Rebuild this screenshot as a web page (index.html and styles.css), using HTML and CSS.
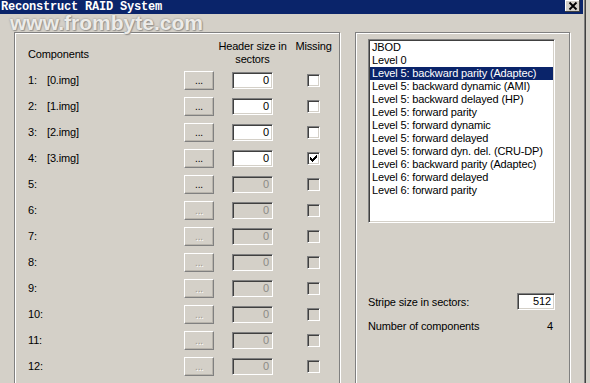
FILE: index.html
```html
<!DOCTYPE html>
<html lang="en">

<head>
     <meta charset="UTF-8">
     <meta name="viewport" content="width=device-width, initial-scale=1.0">
     <title>Reconstruct RAID System</title>
     <link rel="stylesheet" href="styles.css">
</head>

<body>
     <div class="window">
          <div class="titlebar">
               <span class="title">Reconstruct RAID System</span>
               <span class="close-btn">
                    <svg width="12" height="10" viewBox="0 0 12 10">
                         <path d="M2.5 1.5 L9.5 8.5 M9.5 1.5 L2.5 8.5" stroke="#000" stroke-width="1.8" />
                    </svg>
               </span>
          </div>
          <div class="watermark">www.frombyte.com</div>

          <div class="content">
               <!-- components -->
               <div class="group left-group">
                    <div class="comp-grid">
                         <div class="head-comp">Components</div>
                         <div class="head-size"><span>Header size in<br>sectors</span></div>
                         <div class="head-missing"><span>Missing</span></div>

                         <div class="num">1:</div><div class="name">[0.img]</div>
                         <div class="browse">...</div><div class="edit">0</div><div class="check"></div>

                         <div class="num">2:</div><div class="name">[1.img]</div>
                         <div class="browse">...</div><div class="edit">0</div><div class="check"></div>

                         <div class="num">3:</div><div class="name">[2.img]</div>
                         <div class="browse">...</div><div class="edit">0</div><div class="check"></div>

                         <div class="num">4:</div><div class="name">[3.img]</div>
                         <div class="browse">...</div><div class="edit">0</div>
                         <div class="check">
                              <svg width="7" height="7" viewBox="0 0 7 7">
                                   <path d="M0 2h1v1h1v1h1v-1h1v-1h1v-1h1v-1h1v3h-1v1h-1v1h-1v1h-1v1h-1v-1h-1v-1h-1z" fill="#000" />
                              </svg>
                         </div>

                         <div class="num">5:</div><div class="name"></div>
                         <div class="browse">...</div><div class="edit off">0</div><div class="check off"></div>

                         <div class="num">6:</div><div class="name"></div>
                         <div class="browse off">...</div><div class="edit off">0</div><div class="check off"></div>

                         <div class="num">7:</div><div class="name"></div>
                         <div class="browse off">...</div><div class="edit off">0</div><div class="check off"></div>

                         <div class="num">8:</div><div class="name"></div>
                         <div class="browse off">...</div><div class="edit off">0</div><div class="check off"></div>

                         <div class="num">9:</div><div class="name"></div>
                         <div class="browse off">...</div><div class="edit off">0</div><div class="check off"></div>

                         <div class="num">10:</div><div class="name"></div>
                         <div class="browse off">...</div><div class="edit off">0</div><div class="check off"></div>

                         <div class="num">11:</div><div class="name"></div>
                         <div class="browse off">...</div><div class="edit off">0</div><div class="check off"></div>

                         <div class="num">12:</div><div class="name"></div>
                         <div class="browse off">...</div><div class="edit off">0</div><div class="check off"></div>

                         <!-- next row only peeks in at the bottom edge -->
                         <div class="num"></div><div class="name"></div>
                         <div class="browse off"></div><div class="edit off"></div><div class="check off"></div>
                    </div>
               </div>

               <!-- raid type -->
               <div class="group right-group">
                    <ul class="raid-list">
                         <li>JBOD</li>
                         <li>Level 0</li>
                         <li class="selected">Level 5: backward parity (Adaptec)</li>
                         <li>Level 5: backward dynamic (AMI)</li>
                         <li>Level 5: backward delayed (HP)</li>
                         <li>Level 5: forward parity</li>
                         <li>Level 5: forward dynamic</li>
                         <li>Level 5: forward delayed</li>
                         <li>Level 5: forward dyn. del. (CRU-DP)</li>
                         <li>Level 6: backward parity (Adaptec)</li>
                         <li>Level 6: forward delayed</li>
                         <li>Level 6: forward parity</li>
                    </ul>
                    <div class="stripe-row">
                         <span>Stripe size in sectors:</span>
                         <span class="edit stripe">512</span>
                    </div>
                    <div class="count-row">
                         <span>Number of components</span>
                         <span>4</span>
                    </div>
               </div>
          </div>
     </div>
</body>

</html>
```

FILE: styles.css
```css
* {
     padding: 0;
     margin: 0;
     box-sizing: border-box;
}

body {
     width: 590px;
     height: 383px;
     overflow: hidden;
     background: #d4d0c8;
     font-family: "Liberation Sans", Arial, sans-serif;
     font-size: 11px;
     letter-spacing: -0.15px;
     color: #000;
}

.window {
     position: relative;
     width: 585px;
     height: 383px;
     border-right: 1px solid #808080;
     box-shadow: 1px 0 0 #404040;
}

.titlebar {
     height: 14px;
     margin-right: 1px;
     background: #0a246a;
     display: flex;
     justify-content: space-between;
     align-items: flex-start;
}

.title {
     color: #fff;
     font: bold 12px/14px "Liberation Mono", monospace;
     letter-spacing: -0.2px;
     padding-left: 1px;
}

.close-btn {
     width: 15px;
     height: 12px;
     margin-right: 3px;
     background: #d4d0c8;
     box-shadow: inset -1px -1px #404040, inset 1px 1px #fff;
     display: flex;
     justify-content: center;
     align-items: center;
}

.watermark {
     position: absolute;
     left: 10px;
     top: 12px;
     font: bold 21px/21px "Liberation Sans", Arial, sans-serif;
     letter-spacing: 0;
     color: #ecebe8;
     text-shadow: 0 0 2px #8a8884, 1px 1px 1px #9a9894;
     pointer-events: none;
}

.content {
     display: flex;
     gap: 15px;
     padding: 18px 0 0 14px;
}

.group {
     height: 420px;
     border: 1px solid #808080;
     box-shadow: inset 1px 1px #fff, 1px 1px #fff;
}

.left-group {
     width: 326px;
     padding: 7px 0 0 13px;
}

.comp-grid {
     display: grid;
     grid-template-columns: 19px 137px 48px 75px 13px;
     grid-template-rows: 27px;
     grid-auto-rows: 26px;
     align-items: center;
}

.head-comp {
     grid-column: 1 / 4;
}

.head-size,
.head-missing {
     align-self: start;
     display: flex;
     justify-content: center;
     white-space: nowrap;
     text-align: center;
     line-height: 13px;
}

.head-size {
     width: 41px;
}

.head-missing {
     width: 13px;
}

.browse {
     width: 30px;
     height: 19px;
     border: 1px solid;
     border-color: #fff #808080 #808080 #fff;
     box-shadow: inset -1px -1px #b8b4ac;
     background: #d4d0c8;
     text-align: center;
     line-height: 17px;
     font-size: 10px;
}

.browse.off {
     color: #a09c94;
     text-shadow: 1px 1px #fff;
}

.edit {
     width: 41px;
     height: 17px;
     border: 1px solid;
     border-color: #808080 #fff #fff #808080;
     box-shadow: inset 1px 1px #404040, inset -1px -1px #d4d0c8;
     background: #fff;
     text-align: right;
     padding-right: 3px;
     line-height: 15px;
}

.edit.off {
     background: #d4d0c8;
     color: #8c8a86;
}

.check {
     width: 13px;
     height: 13px;
     border: 1px solid;
     border-color: #808080 #fff #fff #808080;
     box-shadow: inset 1px 1px #404040, inset -1px -1px #d4d0c8;
     background: #fff;
     display: flex;
     justify-content: center;
     align-items: center;
}

.check.off {
     background: #d4d0c8;
}

.right-group {
     width: 215px;
     padding: 6px 0 0 12px;
}

.raid-list {
     list-style: none;
     width: 187px;
     height: 184px;
     padding: 1px;
     border: 1px solid;
     border-color: #808080 #fff #fff #808080;
     box-shadow: inset 1px 1px #404040, inset -1px -1px #d4d0c8;
     background: #fff;
}

.raid-list li {
     height: 13px;
     line-height: 13px;
     padding-left: 2px;
     white-space: nowrap;
}

.raid-list li.selected {
     background: #0a246a;
     color: #fff;
}

.stripe-row {
     width: 187px;
     margin-top: 70px;
     display: flex;
     justify-content: space-between;
     align-items: center;
}

.edit.stripe {
     width: 38px;
     height: 17px;
}

.count-row {
     width: 187px;
     margin-top: 10px;
     padding-right: 2px;
     line-height: 13px;
     display: flex;
     justify-content: space-between;
}
```
